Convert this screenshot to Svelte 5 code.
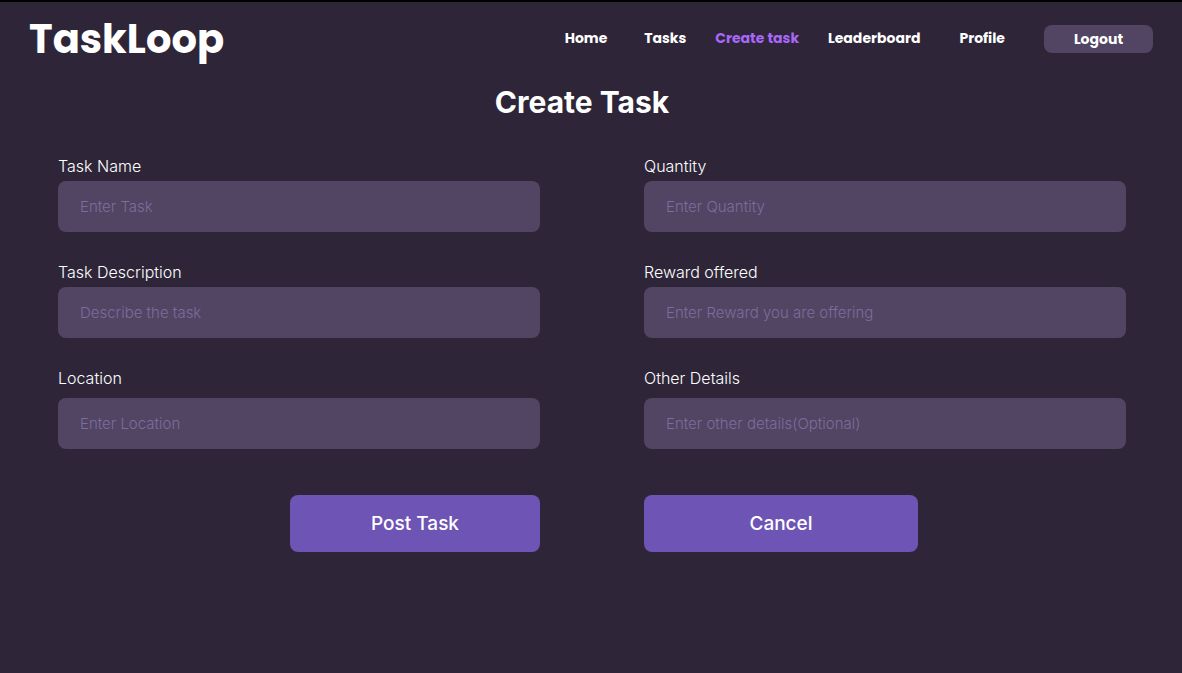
<script>
  const links = [
    { label: 'Home', spacing: 'after' },
    { label: 'Tasks' },
    { label: 'Create task', current: true },
    { label: 'Leaderboard' },
    { label: 'Profile', spacing: 'around' },
  ];

  const rows = [
    [
      { id: 'task-name', label: 'Task Name', placeholder: 'Enter Task' },
      { id: 'quantity', label: 'Quantity', placeholder: 'Enter Quantity' },
    ],
    [
      { id: 'description', label: 'Task Description', placeholder: 'Describe the task' },
      { id: 'reward', label: 'Reward offered', placeholder: 'Enter Reward you are offering' },
    ],
    [
      { id: 'location', label: 'Location', placeholder: 'Enter Location' },
      { id: 'details', label: 'Other Details', placeholder: 'Enter other details(Optional)' },
    ],
  ];
</script>

<div class="page">
  <header>
    <a class="logo" href="#home">TaskLoop</a>
    <nav>
      {#each links as link}
        <a
          href="#{link.label.toLowerCase().replace(' ', '-')}"
          class={link.spacing}
          aria-current={link.current ? 'page' : undefined}>{link.label}</a>
      {/each}
      <button type="button" class="logout">Logout</button>
    </nav>
  </header>

  <main>
    <h1>Create Task</h1>
    <form onsubmit={(event) => event.preventDefault()}>
      {#each rows as row, index}
        <div class="row" class:roomy={index === rows.length - 1}>
          {#each row as field}
            <div class="field">
              <label for={field.id}>{field.label}</label>
              <input id={field.id} type="text" placeholder={field.placeholder} />
            </div>
          {/each}
        </div>
      {/each}
      <div class="row actions">
        <button type="submit" class="post">Post Task</button>
        <button type="button" class="cancel">Cancel</button>
      </div>
    </form>
  </main>
</div>

<style>
  :global(body) {
    background: #2e2638;
  }

  .page {
    box-sizing: border-box;
    min-height: 100vh;
    border-top: 2px solid #000;
    background: #2e2638;
    color: #fff;
    font-family: Inter, sans-serif;
  }

  header {
    display: flex;
    align-items: center;
    justify-content: space-between;
    padding: 7px 29px 0;
    font-family: Poppins, Inter, sans-serif;
    font-weight: 700;
  }

  .logo {
    color: #fff;
    font-size: 40px;
    line-height: 60px;
    text-decoration: none;
  }

  nav {
    display: flex;
    align-items: flex-start;
    gap: 29px;
    font-size: 14px;
    line-height: 26px;
  }

  nav a {
    color: #fff;
    text-decoration: none;
  }

  nav a[aria-current] {
    color: #a967f7;
  }

  .after {
    margin-right: 8px;
  }

  .around {
    margin: 0 10px;
  }

  button {
    border: 0;
    border-radius: 8px;
    color: #fff;
    font-family: inherit;
    cursor: pointer;
  }

  .logout {
    width: 109px;
    height: 28px;
    padding: 0;
    background: #514563;
    font-size: 14px;
    font-weight: 700;
  }

  main {
    padding: 13px 56px 40px 58px;
  }

  h1 {
    margin: 0;
    padding-right: 20px;
    font-size: 30px;
    font-weight: 700;
    line-height: 40px;
    text-align: center;
  }

  form {
    display: flex;
    flex-direction: column;
    gap: 30px;
    padding-top: 34px;
  }

  .row {
    display: grid;
    grid-template-columns: 1fr 1fr;
    column-gap: 104px;
  }

  .field {
    display: flex;
    flex-direction: column;
    gap: 5px;
  }

  .roomy .field {
    gap: 10px;
  }

  label {
    font-size: 16px;
    font-weight: 300;
    line-height: 20px;
  }

  input {
    box-sizing: border-box;
    width: 100%;
    height: 51px;
    padding: 0 22px;
    border: 0;
    border-radius: 8px;
    background: #514563;
    color: #fff;
    font-family: inherit;
    font-size: 15px;
    font-weight: 300;
  }

  input::placeholder {
    color: #7d6c9c;
    opacity: 1;
  }

  .actions {
    padding-top: 16px;
  }

  .actions button {
    height: 57px;
    background: #6e54b5;
    font-size: 19px;
    font-weight: 500;
  }

  .post {
    width: 250px;
    justify-self: end;
  }

  .cancel {
    width: 274px;
  }
</style>
